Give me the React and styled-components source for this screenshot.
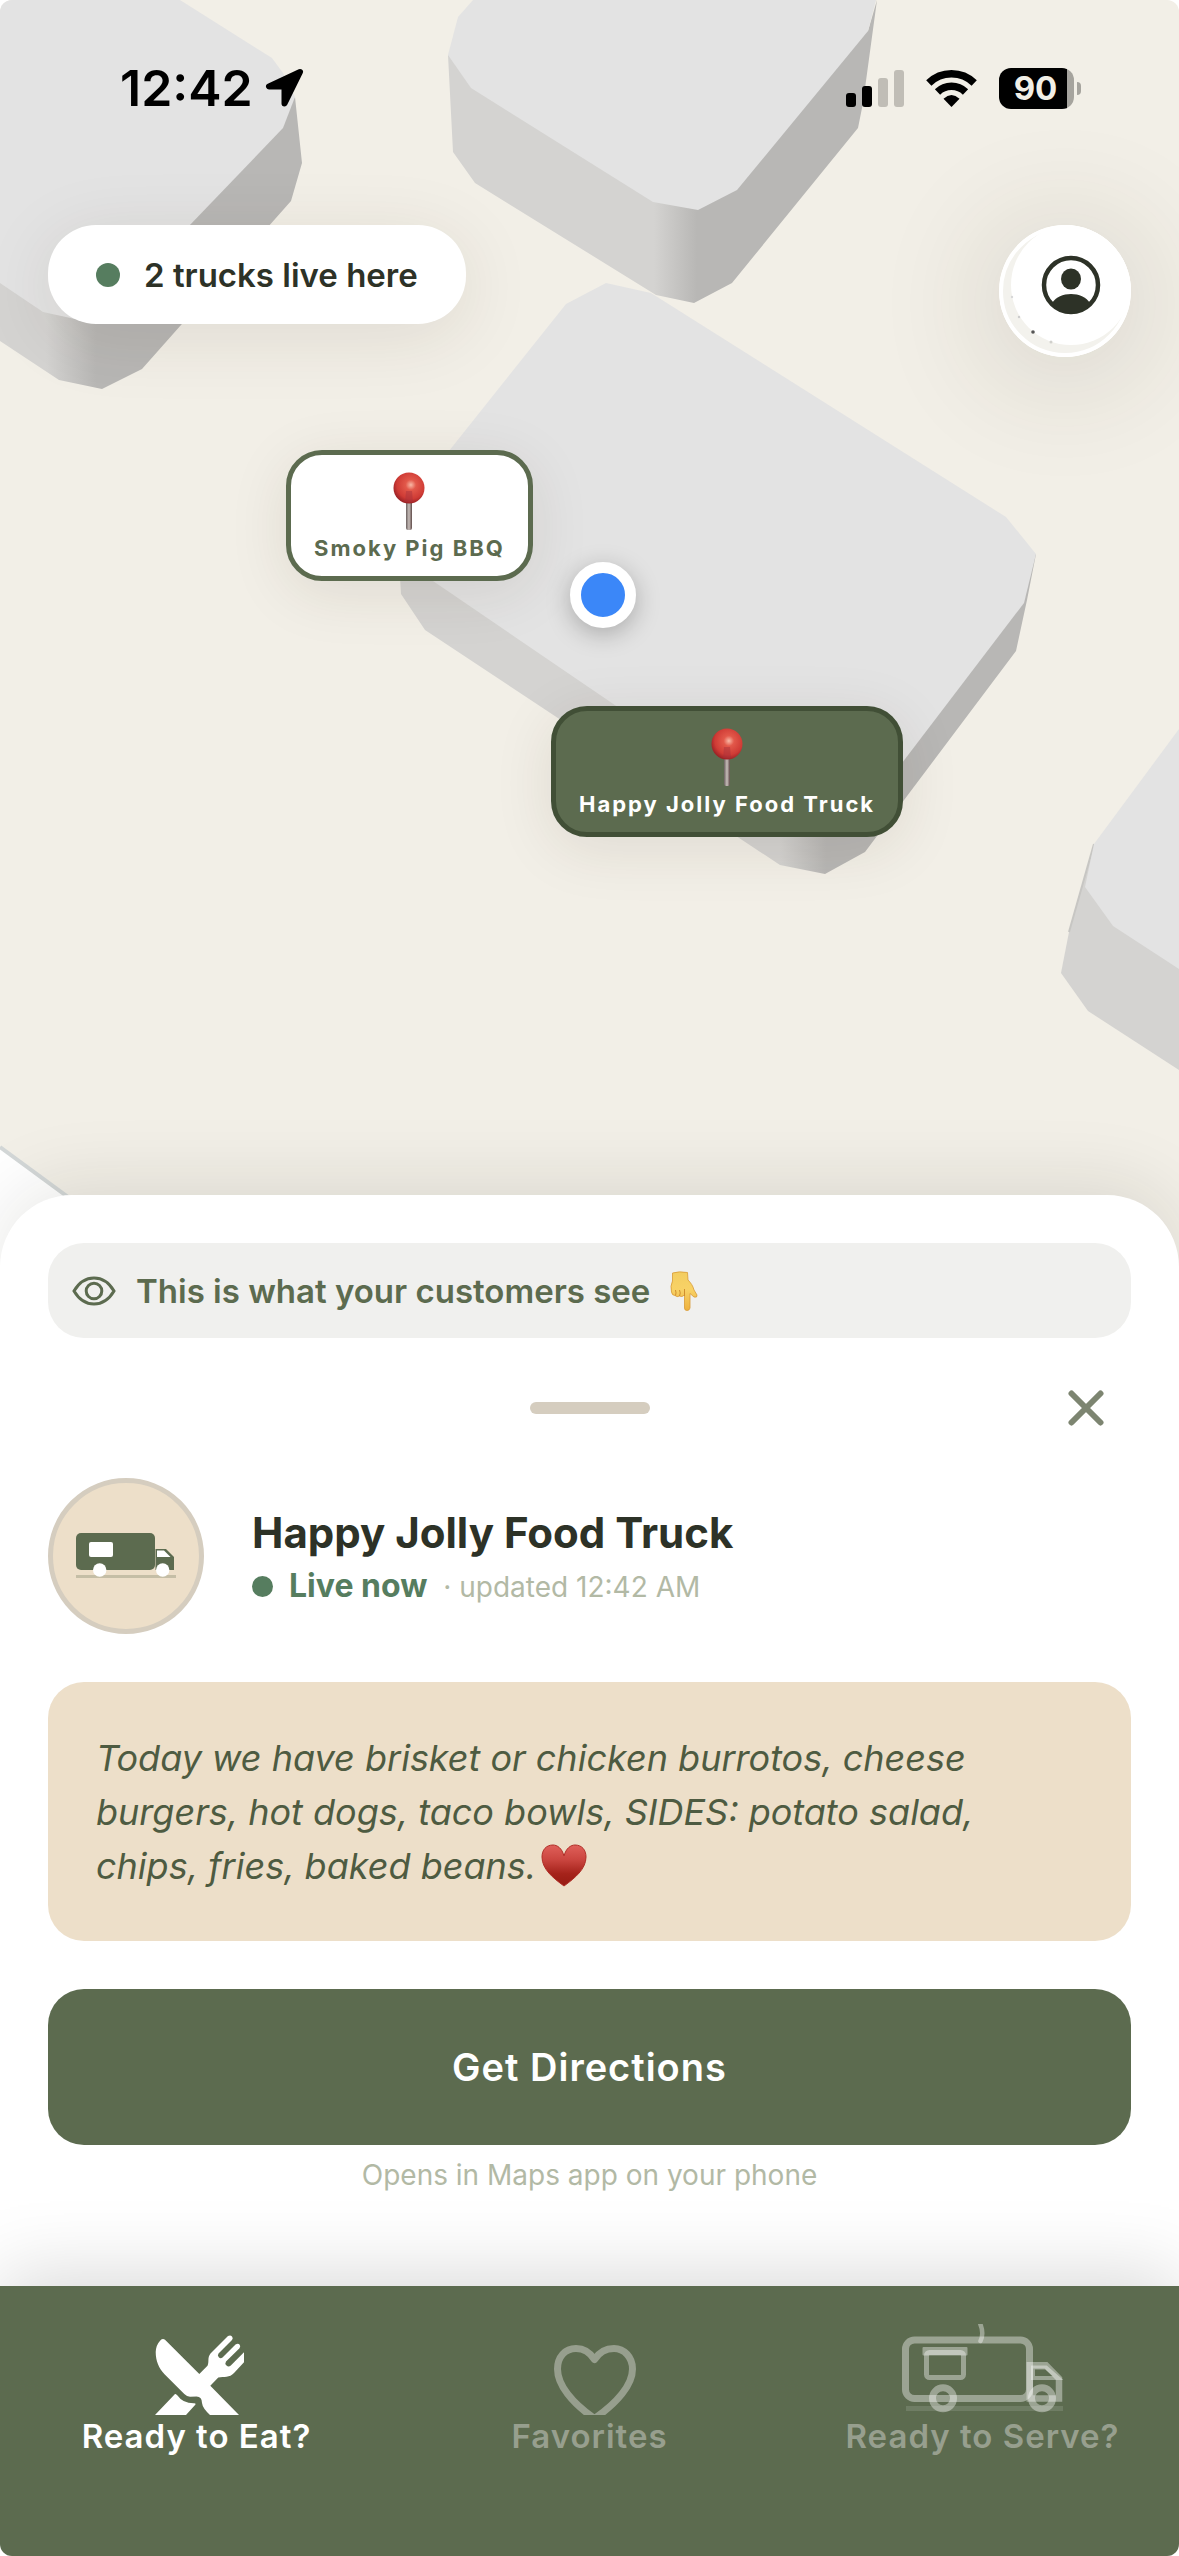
import React from "react";
import styled, { createGlobalStyle } from "styled-components";

const GlobalStyle = createGlobalStyle`
  *, *::before, *::after { box-sizing: border-box; }
  body {
    margin: 0;
    background: #fff;
    color: #2d3227;
    font-family: Inter, "Liberation Sans", sans-serif;
  }
  svg { display: block; flex: none; }
  h1, p { margin: 0; }
  button { font: inherit; border: 0; padding: 0; background: none; cursor: pointer; }
`;

const Screen = styled.div`
  display: flex;
  flex-direction: column;
  min-height: 100vh;
  border-radius: 12px;
  overflow: hidden;
`;

/* ---------- map ---------- */

const MapArea = styled.section`
  position: relative;
  flex: 1 0 auto;
  min-height: 960px;
`;

const MapCanvas = styled.svg`
  position: absolute;
  inset: 0 0 -88px 0;
  width: 100%;
  height: calc(100% + 88px);
`;

const Overlay = styled.div`
  position: relative;
  display: flex;
  flex-direction: column;
  gap: 106px;
`;

const StatusBar = styled.div`
  display: flex;
  align-items: center;
  justify-content: space-between;
  height: 119px;
  padding: 57px 98px 0 120px;
  color: #000;
`;

const StatusGroup = styled.div`
  display: flex;
  align-items: center;
  gap: ${(p) => p.$gap}px;
`;

const Time = styled.span`
  font-size: 50px;
  font-weight: 600;
  line-height: 62px;
`;

const Battery = styled.div`
  display: flex;
  align-items: center;
  gap: 3px;
`;

const BatteryBody = styled.div`
  width: 75px;
  height: 41px;
  border-radius: 12px;
  background: linear-gradient(to right, #000 68px, #a6a49e 68px);
  color: #f2efe6;
  font-size: 33px;
  font-weight: 700;
  line-height: 41px;
  text-align: center;
  padding-right: 2px;
`;

const BatteryNub = styled.div`
  width: 4px;
  height: 13px;
  border-radius: 0 4px 4px 0;
  background: #a6a49e;
`;

const TopRow = styled.div`
  display: flex;
  align-items: flex-start;
  justify-content: space-between;
  padding: 0 48px;
`;

const LivePill = styled.div`
  display: flex;
  align-items: center;
  gap: 24px;
  height: 99px;
  padding: 0 48px;
  border-radius: 48px;
  background: #fff;
  box-shadow: 0 12px 72px rgba(60, 40, 20, 0.1);
  font-size: 33px;
  font-weight: 600;
`;

const Dot = styled.span`
  flex: none;
  width: ${(p) => p.$size}px;
  height: ${(p) => p.$size}px;
  border-radius: 50%;
  background: #567d5f;
`;

const ProfileButton = styled.button`
  display: flex;
  justify-content: flex-end;
  align-items: flex-start;
  width: 132px;
  height: 132px;
  border-radius: 50%;
  overflow: hidden;
  background: #fff;
`;

const ProfileShadow = styled.div`
  border-radius: 50%;
  box-shadow: 0 12px 120px 12px rgba(60, 50, 30, 0.14);
`;

const Marker = styled.button`
  position: absolute;
  left: ${(p) => p.$x}px;
  top: ${(p) => p.$y}px;
  display: flex;
  flex-direction: column;
  align-items: center;
  gap: 2px;
  height: 131px;
  padding: 17px 23px 0;
  border: 5px solid ${(p) => (p.$active ? "#414f36" : "#5c6b4f")};
  border-radius: 36px;
  background: ${(p) => (p.$active ? "#5c6b4f" : "#fff")};
  color: ${(p) => (p.$active ? "#fff" : "#5c6b4f")};
  box-shadow: 0 12px 60px rgba(60, 40, 20, 0.1);
  font-size: 22px;
  font-weight: 700;
  line-height: 28px;
  letter-spacing: 2px;
  white-space: nowrap;
`;

const UserLocation = styled.div`
  position: absolute;
  left: 570px;
  top: 562px;
  width: 66px;
  height: 66px;
  border: 11px solid #fff;
  border-radius: 50%;
  background: #3b87f8;
  box-shadow: 0 6px 24px rgba(0, 0, 0, 0.25);
`;

/* ---------- sheet ---------- */

const Sheet = styled.main`
  position: relative;
  display: flex;
  flex-direction: column;
  padding: 48px 48px 93px;
  border-radius: 72px 72px 0 0;
  background: #fff;
  box-shadow: 0 -12px 72px rgba(30, 25, 10, 0.1);
`;

const Notice = styled.p`
  display: flex;
  align-items: center;
  gap: 20px;
  height: 95px;
  padding: 0 24px;
  border-radius: 36px;
  background: #f0f0ee;
  color: #5c6b4f;
  font-size: 33px;
  font-weight: 600;
`;

const HandleRow = styled.div`
  display: grid;
  grid-template-columns: 1fr auto 1fr;
  align-items: center;
  height: 140px;
`;

const Handle = styled.div`
  grid-column: 2;
  width: 120px;
  height: 12px;
  border-radius: 6px;
  background: #d5cdbf;
`;

const CloseButton = styled.button`
  justify-self: end;
  width: 90px;
  height: 90px;
  display: grid;
  place-items: center;
`;

const TruckHeader = styled.header`
  display: flex;
  align-items: center;
  gap: 48px;
`;

const TruckInfo = styled.div`
  padding-top: 9px;
`;

const Avatar = styled.div`
  display: grid;
  place-items: center;
  flex: none;
  width: 156px;
  height: 156px;
  border: 5px solid #d5cdbf;
  border-radius: 50%;
  background: #eddfc9;
`;

const TruckName = styled.h1`
  font-size: 42px;
  font-weight: 700;
  line-height: 52px;
`;

const TruckStatus = styled.p`
  display: flex;
  align-items: baseline;
  gap: 16px;
  color: #567d5f;
  font-size: 32px;
  font-weight: 700;
  line-height: 54px;
`;

const Updated = styled.span`
  color: #b2b9a5;
  font-size: 28px;
  font-weight: 400;
`;

const MenuNote = styled.p`
  margin-top: 48px;
  padding: 49px 48px 48px;
  border-radius: 36px;
  background: #eddfc9;
  color: #4e5b41;
  font-size: 36px;
  font-style: italic;
  line-height: 54px;

  svg { display: inline-block; margin-left: 5px; vertical-align: -8px; }
`;

const DirectionsButton = styled.button`
  height: 156px;
  margin-top: 48px;
  border-radius: 36px;
  background: #5c6b4f;
  color: #fff;
  font-size: 38px;
  font-weight: 600;
  letter-spacing: 1px;
`;

const Hint = styled.p`
  margin-top: 12px;
  color: #b2b9a5;
  font-size: 28px;
  line-height: 36px;
  text-align: center;
`;

/* ---------- bottom navigation ---------- */

const Nav = styled.nav`
  position: relative;
  display: grid;
  grid-template-columns: repeat(3, 1fr);
  height: 270px;
  background: #5c6b4f;
  box-shadow: 0 -12px 72px rgba(0, 0, 0, 0.15);
`;

const NavItem = styled.a`
  display: flex;
  flex-direction: column;
  align-items: center;
  padding-top: 38px;
  color: ${(p) => (p.$active ? "#fff" : "#979f8e")};
  font-size: 33px;
  font-weight: 600;
  line-height: 42px;
  letter-spacing: 1px;
  text-decoration: none;
  white-space: nowrap;
`;

/* ---------- drawings ---------- */

function CityMap() {
  return (
    <MapCanvas viewBox="0 0 1179 1283" preserveAspectRatio="xMidYMin slice" aria-hidden="true">
      <defs>
        <linearGradient id="sideA" gradientUnits="userSpaceOnUse" x1="46" x2="96" y1="0" y2="0">
          <stop offset="0" stopColor="#d4d3d1" /><stop offset="1" stopColor="#b8b7b5" />
        </linearGradient>
        <linearGradient id="sideB" gradientUnits="userSpaceOnUse" x1="654" x2="697" y1="0" y2="0">
          <stop offset="0" stopColor="#d4d3d1" /><stop offset="1" stopColor="#b8b7b5" />
        </linearGradient>
        <linearGradient id="sideC" gradientUnits="userSpaceOnUse" x1="780" x2="826" y1="0" y2="0">
          <stop offset="0" stopColor="#d4d3d1" /><stop offset="1" stopColor="#b8b7b5" />
        </linearGradient>
      </defs>
      <rect width="1179" height="1283" fill="#f2efe7" />
      <path d="M0 1147 200 1294H0z" fill="#fff" />
      <path d="M0 1147 200 1294" stroke="#d3d7d7" strokeWidth="4" />

      <path d="M0 200H200L295 97 302 163 291 201 142 369 102 389 59 380 0 341z" fill="url(#sideA)" />
      <path d="M0 0H180L272 58 283 73 295 97 283 128 116 302 75 319 43 312 0 283z" fill="#e3e3e3" />

      <path d="M448 55 600 100 868 31 877 0 863 103 858 128 732 283 694 303 656 295 475 183 453 152z" fill="url(#sideB)" />
      <path d="M473 0H876L868 31 737 190 698 210 653 202 471 88 448 55 458 17z" fill="#e3e3e3" />

      <path d="M398 545 700 600 1036 554 1027 600 1016 651 865 852 825 874 780 865 425 630 401 594z" fill="url(#sideC)" />
      <path d="M606 283 651 293 1006 517 1036 554 1024 603 870 805 830 830 785 821 433 581 398 545 406 505 566 304z" fill="#e3e3e3" />

      <path d="M1094 844 1069 932 1061 973 1088 1011 1179 1070V844z" fill="#d4d3d1" />
      <path d="M1094 844 1069 932" stroke="#c7c6c3" strokeWidth="2" />
      <path d="M1179 729 1094 844 1085 887 1113 926 1179 969z" fill="#e3e3e3" />
    </MapCanvas>
  );
}

const LocationArrow = () => (
  <svg width="40" height="40" viewBox="0 0 40 40" aria-hidden="true">
    <path d="M35 4 4 18.500H19.500V35.500z" stroke="#000" strokeWidth="6" strokeLinejoin="round" />
  </svg>
);

const Signal = () => (
  <svg width="58" height="37" viewBox="0 0 58 37" aria-label="Signal">
    <rect x="0" y="23" width="10" height="14" rx="3" />
    <rect x="16" y="16" width="10" height="21" rx="3" />
    <rect x="32" y="8" width="10" height="29" rx="3" fill="#c0bdb6" />
    <rect x="48" y="0" width="10" height="37" rx="3" fill="#c0bdb6" />
  </svg>
);

const Wifi = () => (
  <svg width="51" height="37" viewBox="0 0 51 37" aria-label="Wi-Fi">
    <g fill="none" stroke="#000" strokeWidth="7.500">
      <path d="M2.800 13A32.500 32.500 0 0 1 48.200 13" />
      <path d="M11.500 22A20 20 0 0 1 39.500 22" />
    </g>
    <path d="M25.500 37 17.500 28.700Q25.500 21.500 33.500 28.700z" />
  </svg>
);

const ProfileIcon = () => (
  <svg width="132" height="132" viewBox="0 0 132 132" aria-hidden="true">
    <circle cx="66" cy="66" r="64" fill="#f3f2ed" stroke="#fff" strokeWidth="4" />
    <circle cx="72" cy="60" r="60" fill="#fff" />
    <circle cx="34" cy="107" r="1.800" fill="#555" />
    <circle cx="20" cy="92" r="1.200" fill="#ccc" />
    <circle cx="13" cy="72" r="1.200" fill="#d8d8d8" />
    <circle cx="52" cy="117" r="1.500" fill="#d0d0cc" />
    <circle cx="72" cy="60" r="27" fill="none" stroke="#2d3227" strokeWidth="4.500" />
    <ellipse cx="72" cy="54" rx="10" ry="10.500" fill="#2d3227" />
    <path d="M53 78C57 72 64 69 72 69S87 72 91 78C86 85 79 88 72 88S58 85 53 78z" fill="#2d3227" />
  </svg>
);

const Pushpin = () => (
  <svg width="32" height="60" viewBox="0 0 32 60" aria-hidden="true">
    <defs>
      <radialGradient id="pinHead" cx="0.560" cy="0.400" r="0.600">
        <stop offset="0" stopColor="#f9b9a6" />
        <stop offset="0.280" stopColor="#e2584a" />
        <stop offset="0.750" stopColor="#cf3b35" />
        <stop offset="1" stopColor="#9c2226" />
      </radialGradient>
      <linearGradient id="pinStem">
        <stop offset="0" stopColor="#6a5f5e" />
        <stop offset="0.500" stopColor="#c9bfbb" />
        <stop offset="1" stopColor="#5e4a48" />
      </linearGradient>
    </defs>
    <rect x="13" y="28" width="6" height="30" rx="2" fill="url(#pinStem)" />
    <circle cx="16" cy="16" r="15.500" fill="url(#pinHead)" />
    <path d="M13 19h6l1 11h-8z" fill="#a3303c" opacity="0.450" />
  </svg>
);

const Eye = () => (
  <svg width="44" height="30" viewBox="0 0 44 30" fill="none" stroke="#5c6b4f" strokeWidth="3" aria-hidden="true">
    <path d="M2 15C7 6.500 14 2 22 2S37 6.500 42 15C37 23.500 30 28 22 28S7 23.500 2 15z" />
    <circle cx="22" cy="15" r="7.800" />
  </svg>
);

const PointDown = () => (
  <svg width="28" height="40" viewBox="0 0 28 40" aria-hidden="true">
    <defs>
      <linearGradient id="hand" x2="0" y2="1">
        <stop offset="0" stopColor="#f3cd60" />
        <stop offset="0.450" stopColor="#f8d266" />
        <stop offset="1" stopColor="#eeb13d" />
      </linearGradient>
    </defs>
    <path
      d="M2.500 2Q9 0 17.500 1.500L18 9C21 12 23 15 24 19L27 24Q27.500 27 24 26L20 22.500V37Q19.500 39.500 17 39.500T14.500 37V24Q12 26.500 9.500 25Q7 26.500 5 24.500Q2 24.500 1.500 21Q0 15 2.500 10z"
      fill="url(#hand)" stroke="#d89a35" strokeWidth="0.800"
    />
    <path d="M5.500 24.500Q6.500 22 5.500 19M9.500 25Q11 22 9.500 19M14.500 25V18" fill="none" stroke="#d08f2e" strokeWidth="1" />
  </svg>
);

const Heart = () => (
  <svg width="46" height="43" viewBox="0 0 46 43" role="img" aria-label="red heart">
    <defs>
      <linearGradient id="heart" x2="0" y2="1">
        <stop offset="0" stopColor="#e0605a" />
        <stop offset="0.350" stopColor="#cb4640" />
        <stop offset="0.700" stopColor="#a5231b" />
        <stop offset="1" stopColor="#961a12" />
      </linearGradient>
    </defs>
    <path
      d="M23 12C21 4 16 1 12 1C5 1 1 6 1 13C1 25 12 34 23 42C34 34 45 25 45 13C45 6 41 1 34 1C30 1 25 4 23 12z"
      fill="url(#heart)" stroke="#b02e27" strokeWidth="1"
    />
  </svg>
);

const CloseIcon = () => (
  <svg width="36" height="36" viewBox="0 0 36 36" stroke="#7d8571" strokeWidth="6" strokeLinecap="round" aria-hidden="true">
    <path d="M3.500 3.500 32.500 32.500M32.500 3.500 3.500 32.500" />
  </svg>
);

const TruckSolid = () => (
  <svg width="100" height="46" viewBox="0 0 100 46" aria-hidden="true">
    <rect y="42" width="100" height="3" fill="#c5bea6" />
    <rect width="79" height="37" rx="5" fill="#5c6b4f" />
    <path d="M79.500 16H90L98 24V37H79.500z" fill="#5c6b4f" />
    <g fill="#fff">
      <rect x="13" y="9" width="24" height="15" rx="2" />
      <path d="M81 17.500H88L94.500 24H81z" />
      <circle cx="23.700" cy="37" r="6.700" />
      <circle cx="86.700" cy="37" r="6.700" />
    </g>
  </svg>
);

const ForkKnife = () => (
  <svg width="94" height="91" viewBox="0 0 94 91" fill="#fff" aria-hidden="true">
    <path d="M15 15.800Q12.700 14 10.300 16.500Q6 21 5.700 28C5.700 37 9 44.500 14.300 50L34.300 70Q37 72.700 40 72.700L46.500 72.500Q52 72.700 52 79Q52.500 84 60 91H89L60.300 61.700 68.300 53.500C74 52.500 79.500 54 84 49L94 38.300V28.300L80.800 41.500Q78.500 43.300 76.500 41.500T76 37.500L89.500 24.200Q91 22 89.500 20.500T85.500 20.500L72.500 33.500Q70.500 35 68.800 33.300T68.500 29.500L82 16Q83.500 14 82 12.400T78 12L60.500 29.500C57 34 59.500 38 57.500 41.700L49.300 50z" />
    <path d="M25 70 5 91H36L45.500 80.500Q46 79.300 44 79.300Q33 79.500 27.500 71.500Q26 69.500 25 70z" />
  </svg>
);

const HeartOutline = () => (
  <svg width="94" height="91" viewBox="0 0 94 91" fill="none" stroke="#979f8e" strokeWidth="7" strokeLinejoin="round" aria-hidden="true">
    <path d="M51.500 35.500C46 27 39 24.500 33 24.500C22 24.500 14.500 33 14.500 45C14.500 61 29 79 51.500 94.500C74 79 89.500 61 89.500 45C89.500 33 81 24.500 71 24.500C64 24.500 57 27 51.500 35.500z" />
  </svg>
);

const TruckOutline = () => (
  <svg width="162" height="91" viewBox="0 0 162 91" fill="none" stroke="#fff" strokeOpacity="0.390" aria-hidden="true">
    <rect x="3.500" y="16" width="124" height="58.500" rx="9" strokeWidth="7" />
    <rect x="24.500" y="28.500" width="37" height="25" rx="3" strokeWidth="5" />
    <rect x="20.500" y="23" width="45" height="8.500" rx="1" fill="#fff" fillOpacity="0.390" stroke="none" />
    <path d="M127.800 41.200H144L157 54.500V74.500H127.800z" strokeWidth="6.500" />
    <path d="M131 43.500H144L156 54H131z" strokeWidth="4" />
    <circle cx="41" cy="74.300" r="10.500" strokeWidth="7" />
    <circle cx="140" cy="74.300" r="10.500" strokeWidth="7" />
    <path d="M77.500-2Q82.500 9 78.500 17" strokeWidth="4.500" strokeLinecap="round" />
    <rect x="4" y="82" width="157" height="5" fill="#fff" fillOpacity="0.120" stroke="none" />
  </svg>
);

/* ---------- page ---------- */

const markers = [
  { name: "Smoky Pig BBQ", x: 286, y: 450, active: false },
  { name: "Happy Jolly Food Truck", x: 551, y: 706, active: true },
];

const tabs = [
  { label: "Ready to Eat?", icon: <ForkKnife />, active: true },
  { label: "Favorites", icon: <HeartOutline />, active: false },
  { label: "Ready to Serve?", icon: <TruckOutline />, active: false },
];

export default function App() {
  return (
    <>
      <GlobalStyle />
      <Screen>
        <MapArea aria-label="Map">
          <CityMap />
          <Overlay>
            <StatusBar>
              <StatusGroup $gap={12}>
                <Time>12:42</Time>
                <LocationArrow />
              </StatusGroup>
              <StatusGroup $gap={22}>
                <Signal />
                <Wifi />
                <Battery>
                  <BatteryBody>90</BatteryBody>
                  <BatteryNub />
                </Battery>
              </StatusGroup>
            </StatusBar>
            <TopRow>
              <LivePill>
                <Dot $size={24} />
                2 trucks live here
              </LivePill>
              <ProfileShadow>
                <ProfileButton aria-label="Profile">
                  <ProfileIcon />
                </ProfileButton>
              </ProfileShadow>
            </TopRow>
          </Overlay>
          {markers.map((m) => (
            <Marker key={m.name} $x={m.x} $y={m.y} $active={m.active}>
              <Pushpin />
              {m.name}
            </Marker>
          ))}
          <UserLocation />
        </MapArea>

        <Sheet>
          <Notice>
            <Eye />
            This is what your customers see
            <PointDown />
          </Notice>
          <HandleRow>
            <Handle />
            <CloseButton aria-label="Close">
              <CloseIcon />
            </CloseButton>
          </HandleRow>
          <TruckHeader>
            <Avatar>
              <TruckSolid />
            </Avatar>
            <TruckInfo>
              <TruckName>Happy Jolly Food Truck</TruckName>
              <TruckStatus>
                <Dot $size={21} />
                Live now
                <Updated>· updated 12:42 AM</Updated>
              </TruckStatus>
            </TruckInfo>
          </TruckHeader>
          <MenuNote>
            Today we have brisket or chicken burrotos, cheese burgers, hot dogs,
            taco bowls, SIDES: potato salad, chips, fries, baked beans.
            <Heart />
          </MenuNote>
          <DirectionsButton>Get Directions</DirectionsButton>
          <Hint>Opens in Maps app on your phone</Hint>
        </Sheet>

        <Nav>
          {tabs.map((t) => (
            <NavItem key={t.label} href="#" $active={t.active}>
              {t.icon}
              {t.label}
            </NavItem>
          ))}
        </Nav>
      </Screen>
    </>
  );
}
